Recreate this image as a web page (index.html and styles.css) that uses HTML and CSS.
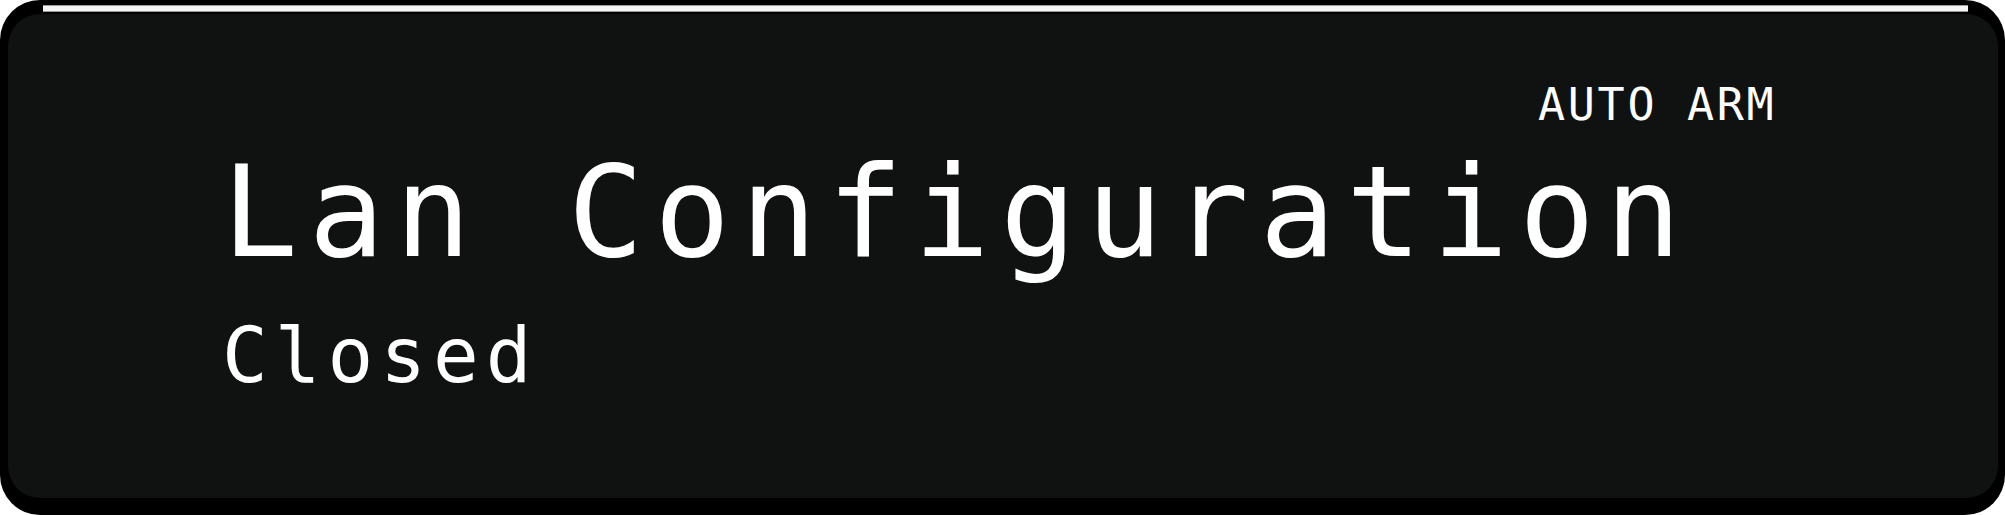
FILE: index.html
```html
<!DOCTYPE html>
<html lang="en">
<head>
<meta charset="utf-8">
<title>Lan Configuration</title>
<link rel="stylesheet" href="styles.css">
</head>
<body>
<div class="panel">
  <div class="screen">
    <div class="badge-row"><span class="badge">AUTO ARM</span></div>
    <div class="title">Lan Configuration</div>
    <div class="status">Closed</div>
  </div>
</div>
</body>
</html>
```

FILE: styles.css
```css
html, body {
  margin: 0;
  padding: 0;
  background: #ffffff;
}
body {
  width: 2005px;
  height: 515px;
  overflow: hidden;
}
.panel {
  position: relative;
  box-sizing: border-box;
  width: 2005px;
  height: 515px;
  background: #000000;
  border-radius: 40px;
  padding: 14px 7px 17px 8px;
  display: flex;
}
.panel::before {
  content: "";
  position: absolute;
  left: 43px;
  right: 37px;
  top: 5px;
  height: 7px;
  background: #f4f4f4;
  border-top: 1px solid #9a9a9a;
  border-bottom: 1px solid #9a9a9a;
  box-sizing: border-box;
}
.screen {
  flex: 1;
  background: #0f1211;
  border-radius: 32px;
  display: flex;
  flex-direction: column;
  padding: 68px 0 0 214px;
  color: #ffffff;
  font-family: "DejaVu Sans Mono", "Liberation Mono", monospace;
}
.badge-row {
  display: flex;
  padding-left: 1316px;
}
.badge {
  font-size: 45px;
  line-height: 45px;
  letter-spacing: 2.7px;
  white-space: nowrap;
}
.title {
  margin-top: 23px;
  font-size: 126px;
  line-height: 126px;
  letter-spacing: 10.6px;
  white-space: nowrap;
}
.status {
  margin-top: 42px;
  font-size: 76px;
  line-height: 76px;
  letter-spacing: 7px;
  white-space: nowrap;
}
```
